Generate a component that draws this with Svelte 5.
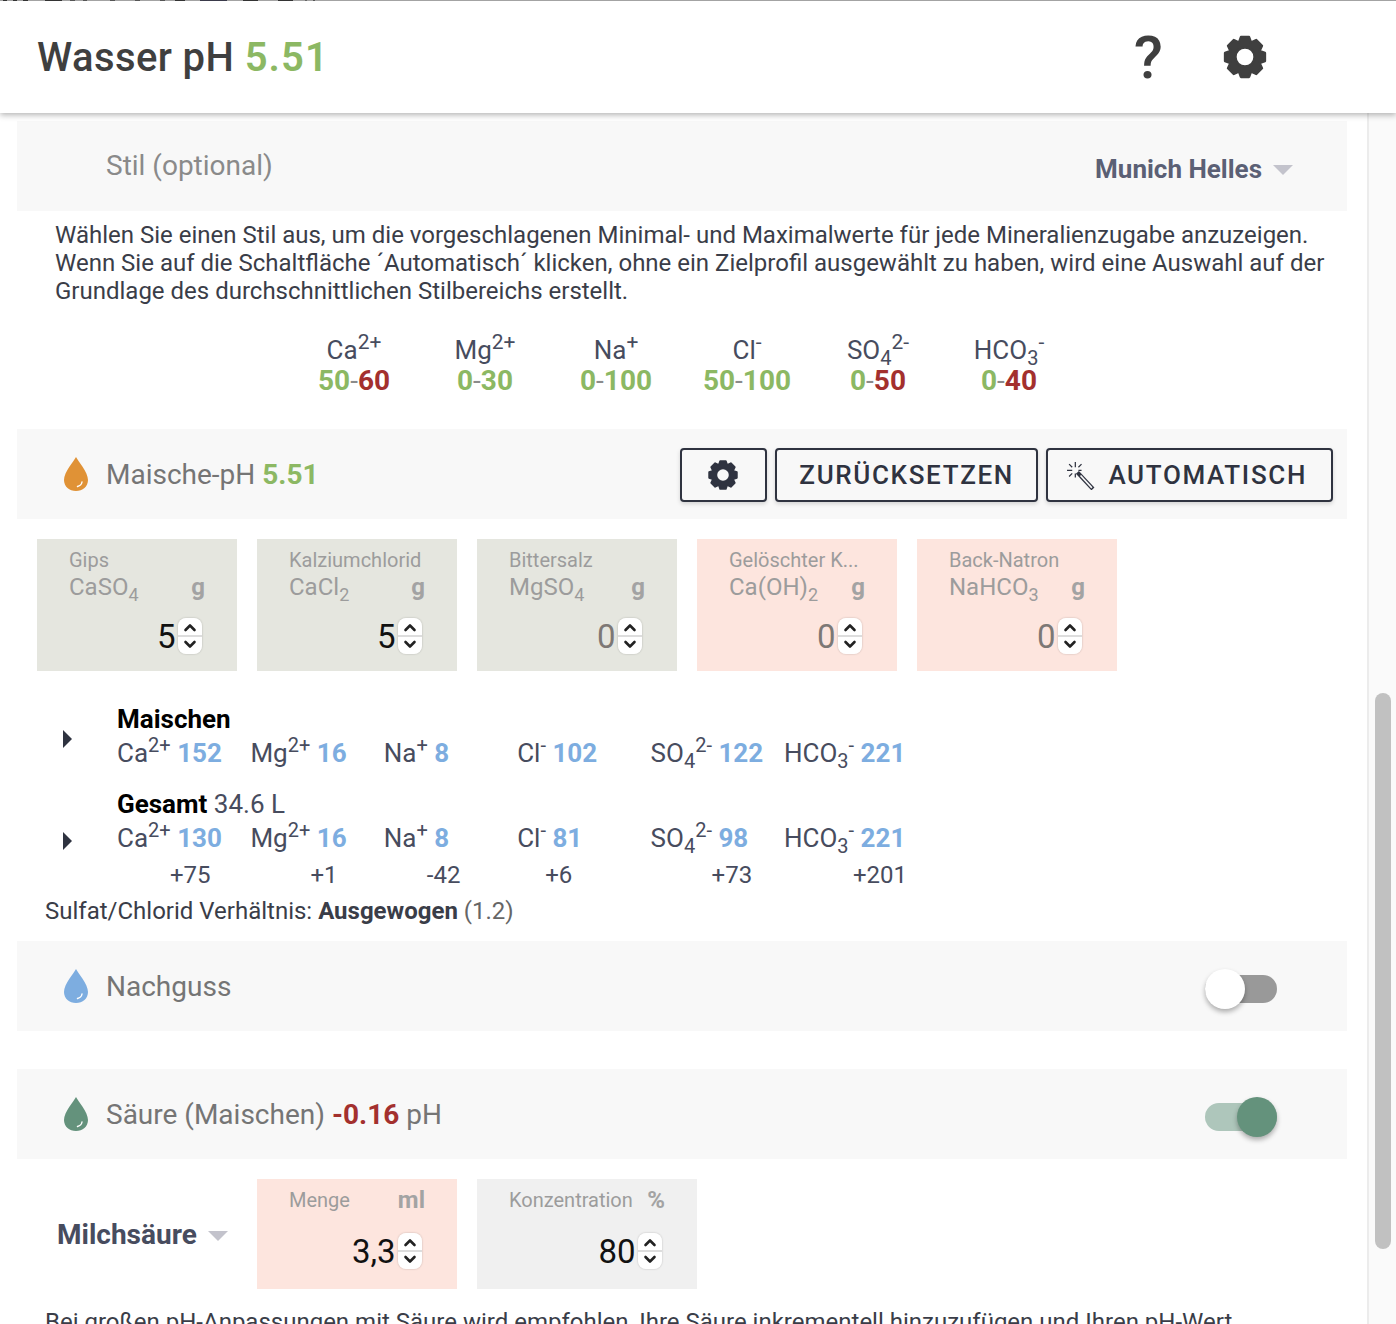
<script>
  function gear() {
    const c = 12, n = 8, ro = 10.6, ri = 8.1;
    let d = '';
    for (let i = 0; i < n; i++) {
      const a = (i / n) * Math.PI * 2 - Math.PI / 2;
      const w = 0.2, g = 0.2;
      const pts = [[ri, a - w - g], [ro, a - w], [ro, a + w], [ri, a + w + g]];
      for (const [r, t] of pts) {
        d += (d ? 'L' : 'M') + (c + r * Math.cos(t)).toFixed(2) + ' ' + (c + r * Math.sin(t)).toFixed(2);
      }
    }
    d += 'Z M12 7 A5 5 0 1 0 12 17 A5 5 0 1 0 12 7Z';
    return d;
  }
  const gearPath = gear();
  const drop = 'M12 0 C14 4 24 15 24 23 C24 29.6 18.6 34 12 34 C5.4 34 0 29.6 0 23 C0 15 10 4 12 0Z';
  const targets = [
    { ion: 'Ca', sup: '2+', lo: '50', hi: '60', hiBad: true },
    { ion: 'Mg', sup: '2+', lo: '0', hi: '30', hiBad: false },
    { ion: 'Na', sup: '+', lo: '0', hi: '100', hiBad: false },
    { ion: 'Cl', sup: '-', lo: '50', hi: '100', hiBad: false },
    { ion: 'SO', sub: '4', sup: '2-', lo: '0', hi: '50', hiBad: true },
    { ion: 'HCO', sub: '3', sup: '-', lo: '0', hi: '40', hiBad: true }
  ];
  const minerals = [
    { name: 'Gips', f: 'CaSO', s: '4', v: '5', tone: 'ok' },
    { name: 'Kalziumchlorid', f: 'CaCl', s: '2', v: '5', tone: 'ok' },
    { name: 'Bittersalz', f: 'MgSO', s: '4', v: '0', tone: 'ok' },
    { name: 'Gelöschter K...', f: 'Ca(OH)', s: '2', v: '0', tone: 'warn' },
    { name: 'Back-Natron', f: 'NaHCO', s: '3', v: '0', tone: 'warn' }
  ];
  const ions = [['Ca', '', '2+'], ['Mg', '', '2+'], ['Na', '', '+'], ['Cl', '', '-'], ['SO', '4', '2-'], ['HCO', '3', '-']];
  const mash = ['152', '16', '8', '102', '122', '221'];
  const total = ['130', '16', '8', '81', '98', '221'];
  const deltas = [['+75', 53], ['+1', 60], ['-42', 43], ['+6', 28], ['+73', 61], ['+201', 69]];
</script>

<div class="page">
  <div class="topline"></div>
  <header class="head">
    <h1>Wasser pH <b>5.51</b></h1>
    <div class="head-icons">
      <span class="q">?</span>
      <svg class="head-gear" viewBox="0 0 24 24"><path d={gearPath} /></svg>
    </div>
  </header>
  <div class="body">
    <main class="content">
      <section class="band first">
        <span class="band-title plain">Stil (optional)</span>
        <span class="select style-select">Munich Helles<i class="caret"></i></span>
      </section>
      <p class="intro">Wählen Sie einen Stil aus, um die vorgeschlagenen Minimal- und Maximalwerte für jede Mineralienzugabe anzuzeigen. Wenn Sie auf die Schaltfläche ´Automatisch´ klicken, ohne ein Zielprofil ausgewählt zu haben, wird eine Auswahl auf der Grundlage des durchschnittlichen Stilbereichs erstellt.</p>
      <div class="targets">
        {#each targets as t}
          <div class="target">
            <div class="t-ion">{t.ion}{#if t.sub}<sub>{t.sub}</sub>{/if}<sup>{t.sup}</sup></div>
            <div class="t-range"><span class="good">{t.lo}</span><span class="dash">-</span><span class={t.hiBad ? 'bad' : 'good'}>{t.hi}</span></div>
          </div>
        {/each}
      </div>

      <section class="band mash">
        <svg class="drop" viewBox="0 0 24 34"><path d={drop} fill="#e09236" /><path d="M18 25 Q17.5 28.5 13.5 29.5" class="gloss" /></svg>
        <span class="band-title">Maische-pH <b class="good">5.51</b></span>
        <div class="btns">
          <button class="btn icon-btn"><svg viewBox="0 0 24 24"><path d={gearPath} /></svg></button>
          <button class="btn">ZURÜCKSETZEN</button>
          <button class="btn auto">
            <svg viewBox="0 0 28 28" class="wand"><path d="M11 11 L26 27" class="w1" /><path d="M14 14 L25 26" class="w2" /><path d="M9 1v5M9 12v4M1 9h5M12 9h3M3 3l3 3M15 3l-3 3M3 15l3-3" class="w3" /></svg>
            AUTOMATISCH
          </button>
        </div>
      </section>

      <div class="cards">
        {#each minerals as m}
          <div class="card {m.tone}">
            <div class="c-name">{m.name}</div>
            <div class="c-row"><span>{m.f}<sub>{m.s}</sub></span><b>g</b></div>
            <div class="c-val" class:muted={m.tone === 'warn' || m.name === 'Bittersalz'}>
              {m.v}
              <span class="spin"><svg viewBox="0 0 24 36"><path d="M7.5 12 L12 7.5 L16.5 12 M7.5 24 L12 28.5 L16.5 24" /></svg></span>
            </div>
          </div>
        {/each}
      </div>

      <div class="summary">
        <div class="sum-block">
          <i class="tri t1"></i>
          <div class="sum-title"><b>Maischen</b></div>
          <div class="ion-row">
            {#each ions as ion, i}
              <span class="ion">{ion[0]}{#if ion[1]}<sub>{ion[1]}</sub>{/if}<sup>{ion[2]}</sup> <b>{mash[i]}</b></span>
            {/each}
          </div>
        </div>
        <div class="sum-block second">
          <i class="tri t2"></i>
          <div class="sum-title"><b>Gesamt</b> 34.6 L</div>
          <div class="ion-row">
            {#each ions as ion, i}
              <span class="ion">{ion[0]}{#if ion[1]}<sub>{ion[1]}</sub>{/if}<sup>{ion[2]}</sup> <b>{total[i]}</b></span>
            {/each}
          </div>
          <div class="delta-row">
            {#each deltas as d}<span style="padding-left:{d[1]}px">{d[0]}</span>{/each}
          </div>
        </div>
        <div class="ratio">Sulfat/Chlorid Verhältnis: <b>Ausgewogen</b> <span>(1.2)</span></div>
      </div>

      <section class="band sparge">
        <svg class="drop" viewBox="0 0 24 34"><path d={drop} fill="#7dade0" /><path d="M18 25 Q17.5 28.5 13.5 29.5" class="gloss" /></svg>
        <span class="band-title">Nachguss</span>
        <span class="toggle off"><i></i></span>
      </section>

      <section class="band acid">
        <svg class="drop" viewBox="0 0 24 34"><path d={drop} fill="#64927c" /><path d="M18 25 Q17.5 28.5 13.5 29.5" class="gloss" /></svg>
        <span class="band-title">Säure (Maischen) <b class="bad">-0.16</b> pH</span>
        <span class="toggle on"><i></i></span>
      </section>

      <div class="acid-row">
        <span class="select acid-select">Milchsäure<i class="caret"></i></span>
        <div class="card small warn">
          <div class="c-row top"><span class="lbl">Menge</span><b>ml</b></div>
          <div class="c-val">3,3<span class="spin"><svg viewBox="0 0 24 36"><path d="M7.5 12 L12 7.5 L16.5 12 M7.5 24 L12 28.5 L16.5 24" /></svg></span></div>
        </div>
        <div class="card small wide grey">
          <div class="c-row top"><span class="lbl">Konzentration</span><b>%</b></div>
          <div class="c-val">80<span class="spin"><svg viewBox="0 0 24 36"><path d="M7.5 12 L12 7.5 L16.5 12 M7.5 24 L12 28.5 L16.5 24" /></svg></span></div>
        </div>
      </div>
      <p class="foot">Bei großen pH-Anpassungen mit Säure wird empfohlen, Ihre Säure inkrementell hinzuzufügen und Ihren pH-Wert</p>
    </main>
    <aside class="track"><div class="thumb"></div></aside>
  </div>
</div>

<style>
  :global(body) { margin: 0; background: #fff; }
  .page { width: 1396px; height: 1324px; overflow: hidden; display: flex; flex-direction: column; font-family: Roboto, sans-serif; color: #474c5e; position: relative; }
  .topline { height: 1px; flex: none; position: relative; z-index: 3; background: linear-gradient(90deg, #a3a3a3 3px, #333 3px 7px, #a3a3a3 7px 13px, #333 13px 17px, #a3a3a3 17px 23px, #333 23px 28px, #a3a3a3 28px 45px, #333 45px 62px, #a3a3a3 62px 70px, #555 70px 75px, #a3a3a3 75px 83px, #555 83px 87px, #a3a3a3 87px 110px, #555 110px 115px, #a3a3a3 115px 135px, #555 135px 140px, #a3a3a3 140px 160px, #555 160px 165px, #a3a3a3 165px 175px, #333 175px 185px, #a3a3a3 185px 200px, #3a3a4a 200px 227px, #a3a3a3 227px 243px, #333 243px 258px, #a3a3a3 258px 278px, #333 278px 293px, #a3a3a3 293px 305px, #666 305px 307px, #a3a3a3 307px 313px, #555 313px 315px, #a3a3a3 315px); }
  .head { height: 112px; flex: none; box-sizing: border-box; display: flex; align-items: center; justify-content: space-between; padding: 0 128px 0 37px; background: #fff; box-shadow: 0 2px 6px rgba(0,0,0,.3); position: relative; z-index: 2; }
  h1 { margin: 0; font-size: 40px; font-weight: 500; color: #3f3f3f; letter-spacing: .4px; }
  h1 b { font-weight: 600; color: #8cb863; letter-spacing: 1.1px; }
  .head-icons { display: flex; align-items: center; gap: 59px; }
  .q { font-size: 60px; font-weight: 500; color: #3f3f3f; line-height: 58px; padding-top: 2px; }
  .head-gear { width: 46px; height: 46px; }
  svg path { stroke-linejoin: round; }
  .head-gear path, .icon-btn path { fill-rule: evenodd; stroke-width: 1.3; }
  .head-gear path { fill: #3f3f3f; stroke: #3f3f3f; }
  .body { flex: 1; display: flex; min-height: 0; }
  .content { width: 1367px; flex: none; box-sizing: border-box; padding: 8px 20px 0 17px; overflow: hidden; }
  .track { flex: 1; background: #fafafa; border-left: 2px solid #ececec; position: relative; }
  .thumb { position: absolute; top: 580px; left: 6px; width: 16px; height: 556px; border-radius: 8px; background: #c1c1c1; }
  .band { height: 90px; background: #f8f8f8; display: flex; align-items: center; box-sizing: border-box; padding-left: 47px; position: relative; }
  .band-title { font-size: 28px; color: #757575; margin-left: 18px; }
  .band-title.plain { margin-left: 42px; padding-bottom: 2px; color: #8a8a8a; }
  .band-title b { font-weight: 700; }
  .good { color: #8cb863; }
  .bad { color: #a3302e; }
  .first { justify-content: space-between; padding-left: 47px; padding-right: 54px; }
  .select { font-size: 27px; font-weight: 700; color: #58607a; display: inline-flex; align-items: center; }
  .style-select { font-size: 26px; margin-top: 5px; color: #5b6075; }
  .caret { width: 0; height: 0; border-left: 10px solid transparent; border-right: 10px solid transparent; border-top: 10px solid #c3c3cc; margin-left: 11px; margin-top: 3px; }
  .intro { margin: 10px 0 0; padding: 0 20px 0 38px; font-size: 24px; line-height: 28px; color: #3a3d48; }
  .targets { display: flex; margin: 30px 0 0 271.5px; }
  .target { width: 131px; text-align: center; }
  .t-ion { font-size: 26px; line-height: 30px; color: #474c5e; }
  .t-ion sup, .ion sup { font-size: 21px; line-height: 0; vertical-align: 10px; }
  .t-ion sub, .ion sub { font-size: 20px; line-height: 0; vertical-align: -6px; }
  .t-range { font-size: 28px; font-weight: 700; line-height: 31px; }
  .dash { color: #8b8b8b; font-weight: 400; }
  .mash { margin-top: 33px; }
  .btns { position: absolute; right: 14px; top: 19px; display: flex; gap: 8px; }
  .btn { height: 54px; box-sizing: border-box; border: 2px solid #2f3340; border-radius: 4px; background: #f8f8f8; color: #2f3340; font: 500 26px Roboto, sans-serif; letter-spacing: 1.65px; padding: 0 22.5px; display: inline-flex; align-items: center; box-shadow: 0 2px 4px rgba(0,0,0,.15); }
  .icon-btn { width: 87px; justify-content: center; padding: 0; }
  .icon-btn svg { width: 32px; height: 32px; }
  .icon-btn path { fill: #2f3340; stroke: #2f3340; }
  .auto { padding: 0 24px 0 18px; gap: 13px; }
  .wand { width: 29px; height: 29px; }
  .w1 { stroke: #2f3340; stroke-width: 4; fill: none; }
  .w2 { stroke: #f8f8f8; stroke-width: 1.6; fill: none; }
  .w3 { stroke: #2f3340; stroke-width: 1.2; fill: none; }
  .drop { width: 24px; height: 34px; flex: none; }
  .gloss { fill: none; stroke: #fff; stroke-width: 1.4; stroke-linecap: round; }
  .cards { display: flex; gap: 20px; margin: 20px 0 0 20px; }
  .card { width: 200px; height: 132px; box-sizing: border-box; padding: 9px 32px 0; position: relative; }
  .ok { background: #e5e6df; }
  .warn { background: #fde5de; }
  .grey { background: #f0f0f0; }
  .c-name { font-size: 20px; line-height: 24px; color: #9c9c9c; white-space: nowrap; }
  .c-row { display: flex; justify-content: space-between; font-size: 24px; line-height: 31px; color: #9c9c9c; }
  .c-row sub { font-size: 18px; line-height: 0; vertical-align: -6px; }
  .c-row b { font-size: 24px; font-weight: 700; color: #a3a3a3; }
  .c-val { position: absolute; right: 35px; bottom: 17px; display: flex; align-items: center; gap: 2.5px; font-size: 33px; color: #111; height: 36px; }
  .c-val.muted { color: #7d7875; }
  .spin { width: 24px; height: 36px; border-radius: 8px; background: linear-gradient(#fff 0 46%, #ddd 48% 52%, #fff 54%); box-shadow: 0 0 2px rgba(0,0,0,.25); display: block; }
  .spin svg { width: 24px; height: 36px; display: block; }
  .spin path { fill: none; stroke: #222; stroke-width: 2.6; stroke-linecap: round; }
  .summary { position: relative; margin-top: 31px; }
  .sum-block { position: relative; padding-left: 100px; }
  .second { margin-top: 17px; }
  .tri { position: absolute; left: 46px; width: 0; height: 0; border-top: 9px solid transparent; border-bottom: 9px solid transparent; border-left: 9px solid #2f3340; }
  .t1 { top: 28px; }
  .t2 { top: 45px; }
  .sum-title { font-size: 26px; line-height: 34px; color: #474c5e; }
  .sum-title b { color: #000; font-weight: 700; }
  .ion-row { display: flex; height: 34px; line-height: 34px; font-size: 26px; }
  .ion { width: 133.4px; white-space: nowrap; flex: none; }
  .ion b { color: #7dade0; font-weight: 700; }
  .ion sup { font-size: 20px; }
  .delta-row { font-size: 24px; line-height: 36px; height: 36px; display: flex; margin-top: 2px; }
  .delta-row span { width: 133.4px; flex: none; box-sizing: border-box; }
  .ratio { font-size: 24px; line-height: 36px; margin-left: 28px; color: #3a3d48; }
  .ratio b { font-weight: 700; }
  .ratio span { color: #666; }
  .sparge { margin-top: 12px; }
  .acid { margin-top: 38px; }
  .toggle { position: absolute; right: 70px; top: 34px; width: 72px; height: 28px; border-radius: 14px; }
  .toggle i { position: absolute; top: -6px; width: 40px; height: 40px; border-radius: 50%; box-shadow: 0 3px 5px rgba(0,0,0,.3); }
  .off { background: #999; }
  .off i { left: 0; background: #fff; }
  .on { background: #aec6bb; }
  .on i { right: 0; background: #64927c; }
  .acid-row { display: flex; gap: 20px; align-items: center; margin-top: 20px; position: relative; }
  .acid-select { width: 220px; box-sizing: border-box; padding-left: 40px; font-size: 28px; color: #474c5e; }
  .small { height: 110px; padding-top: 8px; }
  .wide { width: 220px; }
  .c-row.top { line-height: 26px; }
  .lbl { font-size: 20px; }
  .small .c-val { bottom: 20px; }
  .foot { margin: 19px 0 0 28px; font-size: 24px; line-height: 28px; color: #3a3d48; white-space: nowrap; }
</style>
